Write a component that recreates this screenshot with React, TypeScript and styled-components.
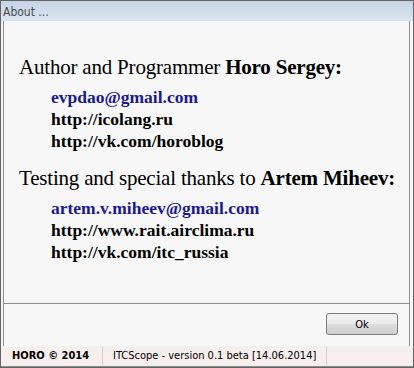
import styled, { createGlobalStyle } from "styled-components";

const GlobalStyle = createGlobalStyle`
    *, *::before, *::after {
        box-sizing: border-box;
    }

    html, body {
        margin: 0;
        padding: 0;
        background: #f7f7f7;
    }
`

const Window = styled.div`
    width: 414px;
    height: 368px;
    border: 1px solid #646464;
    background-color: #f7f7f7;
    display: flex;
    flex-direction: column;
`

const TitleBar = styled.div`
    height: 20px;
    flex: none;
    padding-left: 2px;
    background: linear-gradient(#c7d3e4, #dae4f1);
    color: #4a4a4a;
    font-family: "DejaVu Sans Condensed", "Liberation Sans", sans-serif;
    font-size: 12px;
    line-height: 22px;
`

const Body = styled.div`
    flex: 1;
    display: flex;
    flex-direction: column;
    padding: 0 3px 0 2px;
`

const Panel = styled.div`
    height: 283px;
    flex: none;
    border: 1px solid #8f8f8f;
    border-top: none;
    padding: 31px 0 0 15px;
    font-family: "Liberation Serif", "Times New Roman", serif;
`

const Heading = styled.div`
    font-size: 21px;
    line-height: 30px;
    letter-spacing: -0.2px;
    color: #000;
    margin-bottom: 4px;
    white-space: nowrap;

    b {
        font-weight: bold;
    }
`

const LinkList = styled.div`
    padding-left: 32px;
    margin-bottom: 11px;
`

const LinkLine = styled.div<{ $mail?: boolean }>`
    font-size: 17.5px;
    font-weight: bold;
    line-height: 22px;
    white-space: nowrap;
    color: ${p => (p.$mail ? "#1a1a8c" : "#000")};
`

const ButtonRow = styled.div`
    flex: 1;
    display: flex;
    justify-content: flex-end;
    align-items: flex-start;
    padding: 9px 11px 0 0;
    border-left: 1px solid #8f8f8f;
    border-right: 1px solid #8f8f8f;
`

const OkButton = styled.button`
    width: 72px;
    height: 22px;
    border: 1px solid #7a7a7a;
    border-radius: 3px;
    background: linear-gradient(#f3f3f3 0%, #ebebeb 50%, #dddddd 51%, #cfcfcf 100%);
    font-family: "DejaVu Sans Condensed", "Liberation Sans", sans-serif;
    font-size: 11px;
    color: #000;
    padding: 0;
`

const StatusBar = styled.div`
    height: 21px;
    flex: none;
    display: flex;
    background-color: #f7eeee;
    border-bottom: 1px solid #8a8a8a;
    font-family: "DejaVu Sans Condensed", "Liberation Sans", sans-serif;
    font-size: 11px;
    line-height: 20px;
    color: #000;
`

const StatusCell = styled.div<{ $width: number; $bold?: boolean }>`
    width: ${p => p.$width}px;
    padding-left: ${p => (p.$bold ? 11 : 10)}px;
    border-right: 1px solid #d9d0d0;
    font-weight: ${p => (p.$bold ? "bold" : "normal")};
    white-space: nowrap;
`

const App = () => {
    return (
        <>
            <GlobalStyle />
            <Window>
                <TitleBar>About ...</TitleBar>
                <Body>
                    <Panel>
                        <Heading>Author and Programmer <b>Horo Sergey:</b></Heading>
                        <LinkList>
                            <LinkLine $mail>evpdao@gmail.com</LinkLine>
                            <LinkLine>http://icolang.ru</LinkLine>
                            <LinkLine>http://vk.com/horoblog</LinkLine>
                        </LinkList>
                        <Heading>Testing and special thanks to <b>Artem Miheev:</b></Heading>
                        <LinkList>
                            <LinkLine $mail>artem.v.miheev@gmail.com</LinkLine>
                            <LinkLine>http://www.rait.airclima.ru</LinkLine>
                            <LinkLine>http://vk.com/itc_russia</LinkLine>
                        </LinkList>
                    </Panel>
                    <ButtonRow>
                        <OkButton>Ok</OkButton>
                    </ButtonRow>
                </Body>
                <StatusBar>
                    <StatusCell $width={102} $bold>HORO © 2014</StatusCell>
                    <StatusCell $width={224}>ITCScope - version 0.1 beta [14.06.2014]</StatusCell>
                </StatusBar>
            </Window>
        </>
    )
}

export default App
